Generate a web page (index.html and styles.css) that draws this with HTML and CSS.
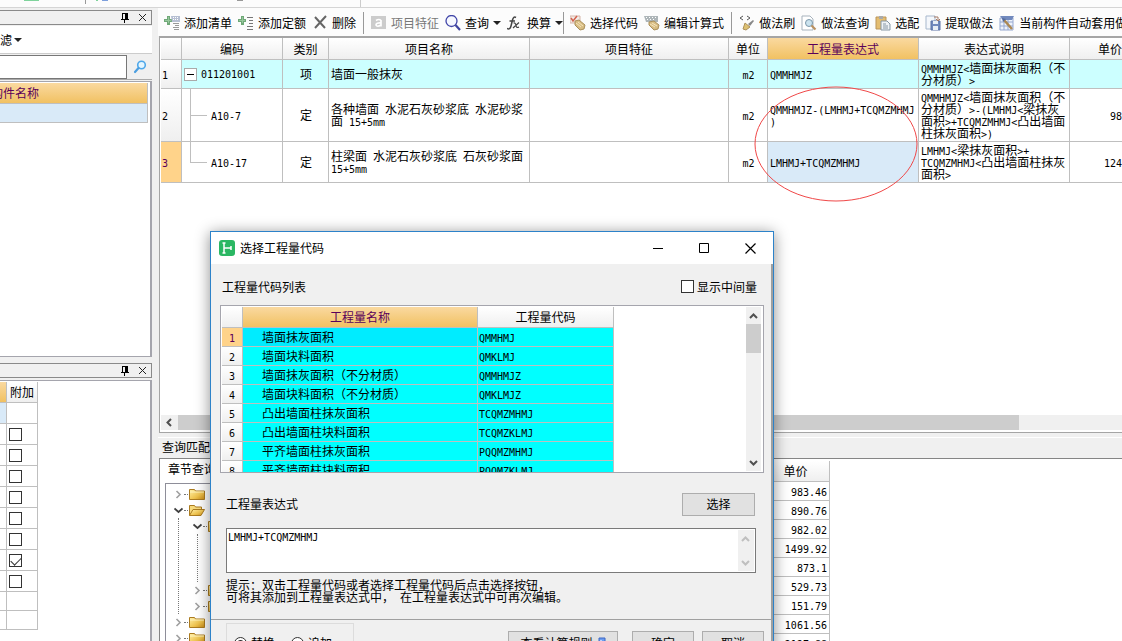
FILE: index.html
```html
<!DOCTYPE html>
<html lang="zh-CN">
<head>
<meta charset="utf-8">
<title>选择工程量代码</title>
<link rel="stylesheet" href="styles.css">
</head>
<body>
<div class="app">
  <header class="strip">
    <svg width="400" height="7" viewBox="0 0 400 7" aria-hidden="true">
      <path fill="#7fd39c" d="M24 0h15v1H24zM96 0h2v1h-2z"/>
      <path fill="#7d9fdc" d="M102 0h6v1h-6z"/>
      <path fill="#999" d="M85 0h1v4h-1zM237 0h6v1h-6z"/>
      <path fill="#ccc" d="M360 0h1v7h-1z"/>
    </svg>
  </header>
  <div class="work">
    <aside class="dock">
      <section class="pane pane-top">
        <div class="pane-title">
          <button class="tiny" aria-label="固定"><svg width="9" height="10" viewBox="0 0 9 10"><path d="M2 0h6v6h1v1H5v3H4V7H1V6h1zM3 1v5h2V1z" fill="#000" fill-rule="evenodd"/></svg></button>
          <button class="tiny" aria-label="关闭"><svg width="9" height="9" viewBox="0 0 9 9"><path d="M1 1l7 7M8 1L1 8" stroke="#222"/></svg></button>
        </div>
        <button class="filter">滤<span class="caret"></span></button>
        <div class="search">
          <input type="text" aria-label="搜索构件">
          <button class="find" aria-label="搜索"><svg width="14" height="14" viewBox="0 0 14 14"><circle cx="8.500" cy="5" r="3.800" fill="#e4f6ff" stroke="#4fa8ea" stroke-width="1.600"/><path d="M5.500 8L2 12" stroke="#4b9ee0" stroke-width="2.200" stroke-linecap="round"/></svg></button>
        </div>
        <div class="names">
          <div class="names-head">构件名称</div>
          <div class="names-row"></div>
        </div>
      </section>
      <section class="pane pane-bottom">
        <div class="pane-title">
          <button class="tiny" aria-label="固定"><svg width="9" height="10" viewBox="0 0 9 10"><path d="M2 0h6v6h1v1H5v3H4V7H1V6h1zM3 1v5h2V1z" fill="#000" fill-rule="evenodd"/></svg></button>
          <button class="tiny" aria-label="关闭"><svg width="9" height="9" viewBox="0 0 9 9"><path d="M1 1l7 7M8 1L1 8" stroke="#222"/></svg></button>
        </div>
        <div class="props">
          <table class="grid attach">
            <thead><tr><th class="hot"></th><th>附加</th></tr></thead>
            <tbody>
              <tr><td class="sel"></td><td></td></tr>
              <tr><td></td><td><input type="checkbox" aria-label="附加 2"></td></tr>
              <tr><td></td><td><input type="checkbox" aria-label="附加 3"></td></tr>
              <tr><td></td><td><input type="checkbox" aria-label="附加 4"></td></tr>
              <tr><td></td><td><input type="checkbox" aria-label="附加 5"></td></tr>
              <tr><td></td><td><input type="checkbox" aria-label="附加 6"></td></tr>
              <tr><td></td><td><input type="checkbox" aria-label="附加 7"></td></tr>
              <tr><td></td><td><input type="checkbox" aria-label="附加 8" checked></td></tr>
              <tr><td></td><td><input type="checkbox" aria-label="附加 9"></td></tr>
              <tr class="low"><td></td><td></td></tr>
              <tr class="low"><td></td><td></td></tr>
            </tbody>
          </table>
        </div>
      </section>
    </aside>

    <main class="main">
      <nav class="toolbar">
        <button class="tool"><svg width="16" height="16" viewBox="0 0 16 16"><path d="M3 1h3v3h2v3H6v3H3V7H0V4h3z" fill="#6fa877"/><path d="M4 2h1v6H4zM1 5h6v1H1z" fill="#97c79d"/><path d="M7 1h9v6H8z" fill="#b6bfd2"/><path d="M9 2h1v1H9zM11 2h1v1h-1zM13 2h1v1h-1zM9 4h1v1H9zM11 4h1v1h-1zM13 4h1v1h-1z" fill="#fff"/><path d="M9 8h6v1H9zM11 10h4v1h-4zM9 12h6v1H9zM10 14h5v1h-5z" fill="#999"/></svg>添加清单</button>
        <button class="tool"><svg width="16" height="16" viewBox="0 0 16 16"><path d="M3 1h3v3h2v3H6v3H3V7H0V4h3z" fill="#6fa877"/><path d="M4 2h1v6H4zM1 5h6v1H1z" fill="#97c79d"/><path d="M9 2h6v1H9zM11 5h4v1h-4zM11 8h4v1h-4zM9 11h6v1H9zM9 14h6v1H9z" fill="#777"/></svg>添加定额</button>
        <button class="tool"><svg width="16" height="16" viewBox="0 0 16 16"><path d="M3 2l10 11M14 1L3 13" stroke="#666" stroke-width="2"/></svg>删除</button>
        <span class="sep"></span>
        <button class="tool" disabled><svg width="16" height="16" viewBox="0 0 16 16"><path d="M0 1h15v13H0z" fill="#ccc"/><path d="M5 5.500q3-2 5 0v6M10 8q-5-.5-5 2 1 2.500 5 0" stroke="#fff" stroke-width="1.700" fill="none"/></svg>项目特征</button>
        <button class="tool"><svg width="16" height="16" viewBox="0 0 16 16"><circle cx="6.500" cy="6" r="5.500" fill="#f6f8ff" stroke="#4146a8" stroke-width="1.300"/><path d="M10.500 10L15 15" stroke="#3f449f" stroke-width="2.200"/></svg>查询<span class="caret"></span></button>
        <button class="tool"><svg width="16" height="16" viewBox="0 0 16 16"><path d="M9 2.500Q6.500 1 5.500 5L4 11Q3 15 0 13.500M2.500 6H8" stroke="#444" stroke-width="1.500" fill="none"/><path d="M6.500 8q2-.5 2.500 2.500T12 12M12 7.500L6 13" stroke="#444" stroke-width="1.200" fill="none"/></svg>换算<span class="caret"></span></button>
        <span class="sep tight"></span>
        <button class="tool"><svg width="16" height="16" viewBox="0 0 16 16"><path d="M0 1h10v7H0z" fill="#f2ece8" stroke="#d6b5a8"/><path d="M1 3l2 3 4-5" stroke="#d2634f" stroke-width="1.500" fill="none"/><path d="M5 6l4-1 6 5-1 4-4 1-5-5z" fill="#d8bd83" stroke="#ab905b"/><path d="M6 8l5 4M8 7l5 4" stroke="#f5e4bc"/></svg>选择代码</button>
        <button class="tool"><svg width="16" height="16" viewBox="0 0 16 16"><path d="M0 1h14v6H2z" fill="#adb5b8"/><path d="M2 2h1v1H2zM5 2h1v1H5zM8 2h1v1H8zM11 2h1v1h-1zM3 4h1v1H3zM6 4h1v1H6zM9 4h1v1H9z" fill="#fff"/><path d="M5 7l5-1 5 4-1 4-4 1-5-5z" fill="#d8bd83" stroke="#ab905b"/><path d="M6 9l5 3M8 8l5 3" stroke="#f5e4bc"/></svg>编辑计算式</button>
        <span class="sep"></span>
        <button class="tool"><svg width="16" height="16" viewBox="0 0 16 16"><path d="M4 1L1 3l3 2M8 1l3 2-3 2" stroke="#555" fill="none"/><path d="M14 5l1 1-4 5-2-2z" fill="#888"/><path d="M6 8l5 4-4 3-3-1z" fill="#ddc172" stroke="#ad925a"/></svg>做法刷</button>
        <button class="tool"><svg width="16" height="16" viewBox="0 0 16 16"><path d="M1 1h8l3 3v11H1z" fill="#fff" stroke="#a8b3bd"/><circle cx="8" cy="8" r="3.500" fill="#cbe3ef" stroke="#7b97aa"/><path d="M10.500 10.500l4 4" stroke="#ba915f" stroke-width="2.200"/></svg>做法查询</button>
        <button class="tool"><svg width="16" height="16" viewBox="0 0 16 16"><path d="M1 2h10v12H1z" fill="#e4bd70" stroke="#ba955b"/><path d="M4 1h4v3H4z" fill="#aaa"/><path d="M6 6h6l3 3v6H6z" fill="#eef2f5" stroke="#8797a4"/><path d="M8 9h3M8 11h5M8 13h5" stroke="#8797a4"/></svg>选配</button>
        <button class="tool"><svg width="16" height="16" viewBox="0 0 16 16"><path d="M1 1h9v13H1z" fill="#f4f7fb" stroke="#a7b8cd"/><path d="M6 6h9v9H6z" fill="#7189bd" stroke="#5c72a6"/><path d="M8 6h5v3H8zM8 11h5v4H8z" fill="#e8edf6"/><path d="M9 2h4v3M11 4l2 2 2-2" stroke="#a57a66" fill="none"/></svg>提取做法</button>
        <button class="tool"><svg width="16" height="16" viewBox="0 0 16 16"><path d="M1 3h13v12H1zM1 7h13M1 11h13M5 3v12M9 3v12" fill="#edf2fb" stroke="#95a8d0"/><path d="M1 1h14l-2 4H4z" fill="#7189bd"/><path d="M5 5l8 9" stroke="#ab8853" stroke-width="2.500"/><path d="M3 3l4 1-3 3z" fill="#536b9e"/></svg>当前构件自动套用做法</button>
      </nav>

      <section class="bill">
        <table class="grid bill-grid">
          <colgroup><col class="c-no"><col class="c-code"><col class="c-kind"><col class="c-name"><col class="c-trait"><col class="c-unit"><col class="c-expr"><col class="c-note"><col></colgroup>
          <thead>
            <tr><th></th><th>编码</th><th>类别</th><th>项目名称</th><th>项目特征</th><th>单位</th><th class="hot">工程量表达式</th><th>表达式说明</th><th class="end">单价</th></tr>
          </thead>
          <tbody>
            <tr class="r1 item">
              <th class="no"><span class="m">1</span></th>
              <td class="code"><button class="fold" aria-label="折叠"></button><span class="m">011201001</span></td>
              <td class="mid">项</td><td>墙面一般抹灰</td><td></td><td class="mid"><span class="m">m2</span></td>
              <td><span class="m">QMMHMJZ</span></td>
              <td><span class="m">QMMHMJZ&lt;</span>墙面抹灰面积（不<br>分材质）<span class="m">&gt;</span></td><td class="end"></td>
            </tr>
            <tr class="r2">
              <th class="no"><span class="m">2</span></th>
              <td class="branch"><span class="m">A10-7</span></td>
              <td class="mid">定</td><td>各种墙面&ensp;水泥石灰砂浆底&ensp;水泥砂浆<br>面&ensp;<span class="m">15+5mm</span></td><td></td><td class="mid"><span class="m">m2</span></td>
              <td><span class="m">QMMHMJZ-(LMHMJ+TCQMZMHMJ<br>)</span></td>
              <td><span class="m">QMMHMJZ&lt;</span>墙面抹灰面积（不<br>分材质）<span class="m">&gt;-(LMHMJ&lt;</span>梁抹灰<br>面积<span class="m">&gt;+TCQMZMHMJ&lt;</span>凸出墙面<br>柱抹灰面积<span class="m">&gt;)</span></td><td class="end"><span class="m">98</span></td>
            </tr>
            <tr class="r3">
              <th class="no cur"><span class="m">3</span></th>
              <td class="branch last"><span class="m">A10-17</span></td>
              <td class="mid">定</td><td>柱梁面&ensp;水泥石灰砂浆底&ensp;石灰砂浆面<br><span class="m">15+5mm</span></td><td></td><td class="mid"><span class="m">m2</span></td>
              <td class="sel"><span class="m">LMHMJ+TCQMZMHMJ</span></td>
              <td><span class="m">LMHMJ&lt;</span>梁抹灰面积<span class="m">&gt;+</span><br><span class="m">TCQMZMHMJ&lt;</span>凸出墙面柱抹灰<br>面积<span class="m">&gt;</span></td><td class="end"><span class="m">124</span></td>
            </tr>
          </tbody>
        </table>
        <div class="hscroll">
          <svg width="17" height="15" viewBox="0 0 17 15" aria-hidden="true"><path d="M10 4L6.500 7.500 10 11" stroke="#505050" stroke-width="2" fill="none"/></svg>
          <div class="hthumb"></div>
        </div>
      </section>

      <section class="query">
        <div class="query-title">查询匹配清单</div>
        <div class="query-body">
          <div class="chapters">
            <div class="chapters-tab">章节查询</div>
            <ul class="tree">
              <li><div class="node"><svg class="chev"><use href="#shut"/></svg><i></i><svg class="dir"><use href="#folder"/></svg></div></li>
              <li><div class="node"><svg class="chev"><use href="#open"/></svg><i></i><svg class="dir"><use href="#folder-open"/></svg></div>
                <ul>
                  <li><div class="node"><svg class="chev"><use href="#open"/></svg><i></i><svg class="dir"><use href="#folder"/></svg></div>
                    <ul><li class="node"></li><li class="node"></li><li class="node"></li></ul>
                  </li>
                  <li><div class="node"><svg class="chev"><use href="#shut"/></svg><i></i><svg class="dir"><use href="#folder"/></svg></div></li>
                  <li><div class="node"><svg class="chev"><use href="#shut"/></svg><i></i><svg class="dir"><use href="#folder"/></svg></div></li>
                </ul>
              </li>
              <li><div class="node"><svg class="chev"><use href="#shut"/></svg><i></i><svg class="dir"><use href="#folder"/></svg></div></li>
              <li><div class="node"><svg class="chev"><use href="#shut"/></svg><i></i><svg class="dir"><use href="#folder"/></svg></div></li>
            </ul>
          </div>
          <div class="prices">
            <table class="grid price-grid">
              <thead><tr><th>单价</th></tr></thead>
              <tbody>
                <tr><td><span class="m">983.46</span></td></tr>
                <tr><td><span class="m">890.76</span></td></tr>
                <tr><td><span class="m">982.02</span></td></tr>
                <tr><td><span class="m">1499.92</span></td></tr>
                <tr><td><span class="m">873.1</span></td></tr>
                <tr><td><span class="m">529.73</span></td></tr>
                <tr><td><span class="m">151.79</span></td></tr>
                <tr><td><span class="m">1061.56</span></td></tr>
                <tr><td><span class="m">2127.88</span></td></tr>
              </tbody>
            </table>
          </div>
        </div>
      </section>
    </main>
  </div>

  <svg class="mark" width="164" height="116" viewBox="0 0 164 116" aria-hidden="true"><ellipse cx="82" cy="58" rx="81" ry="57" fill="none" stroke="#f04848"/></svg>

  <div class="dialog" role="dialog" aria-labelledby="dlg-title">
    <div class="dlg-title">
      <svg width="16" height="16" viewBox="0 0 16 16" aria-hidden="true"><rect width="16" height="16" rx="3" fill="#2bb763"/><path d="M5 3v10M5 8h7M12 6v4M3.500 3h3M3.500 13h3" stroke="#fff" stroke-width="1.500" fill="none"/></svg>
      <h1 id="dlg-title">选择工程量代码</h1>
      <button class="win" aria-label="最小化"><svg width="11" height="11" viewBox="0 0 11 11"><path d="M0 5h10v1H0z"/></svg></button>
      <button class="win" aria-label="最大化"><svg width="11" height="11" viewBox="0 0 11 11"><path d="M.5.5h9v9h-9z" fill="none" stroke="#000"/></svg></button>
      <button class="win" aria-label="关闭"><svg width="11" height="11" viewBox="0 0 11 11"><path d="M.5.5l10 10M10.500.5l-10 10" stroke="#000" stroke-width="1.200"/></svg></button>
    </div>
    <div class="dlg-body">
      <div class="list-bar"><h2>工程量代码列表</h2><label><input type="checkbox">显示中间量</label></div>
      <div class="list">
        <table class="grid codes">
          <colgroup><col class="k-no"><col class="k-name"><col class="k-code"></colgroup>
          <thead><tr><th></th><th class="hot">工程量名称</th><th>工程量代码</th></tr></thead>
          <tbody>
            <tr class="on"><th class="cur"><span class="m">1</span></th><td>墙面抹灰面积</td><td><span class="m">QMMHMJ</span></td></tr>
            <tr><th><span class="m">2</span></th><td>墙面块料面积</td><td><span class="m">QMKLMJ</span></td></tr>
            <tr><th><span class="m">3</span></th><td>墙面抹灰面积（不分材质）</td><td><span class="m">QMMHMJZ</span></td></tr>
            <tr><th><span class="m">4</span></th><td>墙面块料面积（不分材质）</td><td><span class="m">QMKLMJZ</span></td></tr>
            <tr><th><span class="m">5</span></th><td>凸出墙面柱抹灰面积</td><td><span class="m">TCQMZMHMJ</span></td></tr>
            <tr><th><span class="m">6</span></th><td>凸出墙面柱块料面积</td><td><span class="m">TCQMZKLMJ</span></td></tr>
            <tr><th><span class="m">7</span></th><td>平齐墙面柱抹灰面积</td><td><span class="m">PQQMZMHMJ</span></td></tr>
            <tr><th><span class="m">8</span></th><td>平齐墙面柱块料面积</td><td><span class="m">PQQMZKLMJ</span></td></tr>
          </tbody>
        </table>
        <div class="vscroll">
          <svg width="15" height="17" viewBox="0 0 15 17" aria-hidden="true"><path d="M4 11l3.500-3.500L11 11" stroke="#505050" stroke-width="2" fill="none"/></svg>
          <div class="vthumb"></div>
          <svg width="15" height="17" viewBox="0 0 15 17" aria-hidden="true"><path d="M4 7l3.500 3.500L11 7" stroke="#505050" stroke-width="2" fill="none"/></svg>
        </div>
      </div>
      <div class="expr-bar"><label for="expr">工程量表达式</label><button class="btn">选择</button></div>
      <div class="expr">
        <textarea id="expr" class="m">LMHMJ+TCQMZMHMJ</textarea>
        <div class="vscroll pale">
          <svg width="16" height="17" viewBox="0 0 16 17" aria-hidden="true"><path d="M4 11l3.500-3.500L11 11" stroke="#bfbfbf" stroke-width="2" fill="none"/></svg>
          <svg width="16" height="17" viewBox="0 0 16 17" aria-hidden="true"><path d="M4 7l3.500 3.500L11 7" stroke="#bfbfbf" stroke-width="2" fill="none"/></svg>
        </div>
      </div>
      <p class="hint">提示：双击工程量代码或者选择工程量代码后点击选择按钮，<br>可将其添加到工程量表达式中，&ensp;在工程量表达式中可再次编辑。</p>
      <div class="foot">
        <div class="modes">
          <label><input type="radio" name="mode" checked>替换</label>
          <label><input type="radio" name="mode">追加</label>
        </div>
        <div class="actions">
          <button class="btn rules">查看计算规则<svg width="9" height="12" viewBox="0 0 9 12"><path d="M2 1h6v10H2z" fill="#6d9df0" stroke="#3d67c4"/><path d="M3 3h2v5H3z" fill="#b9d2ff"/></svg></button>
          <button class="btn ok">确定</button>
          <button class="btn ok">取消</button>
        </div>
      </div>
    </div>
  </div>
</div>

<svg width="0" height="0" class="defs" aria-hidden="true">
  <linearGradient id="gold" x2="1" y2="1"><stop offset="0" stop-color="#fff0a8"/><stop offset=".6" stop-color="#eec24d"/><stop offset="1" stop-color="#c98b17"/></linearGradient>
  <symbol id="shut" viewBox="0 0 9 9"><path d="M2.500 1L6 4.500 2.500 8" stroke="#a0a0a0" stroke-width="1.600" fill="none"/></symbol>
  <symbol id="open" viewBox="0 0 9 9"><path d="M.5 2.500L4.500 6l4-3.500" stroke="#404040" stroke-width="1.800" fill="none"/></symbol>
  <symbol id="folder" viewBox="0 0 16 13"><path d="M.5 11.500v-10h5l1 1.500h9v8.500z" fill="url(#gold)" stroke="#ab7b20"/><path d="M1 4h14" stroke="#fff3bd"/></symbol>
  <symbol id="folder-open" viewBox="0 0 16 13"><path d="M.5 11.500v-10h5l1 1.500h6v3" fill="#f7da7c" stroke="#ab7b20"/><path d="M.5 11.500L4 5.500h11.500L12 11.500z" fill="url(#gold)" stroke="#ab7b20"/></symbol>
</svg>
</body>
</html>
```

FILE: styles.css
```css
* { box-sizing: border-box; }

body {
  margin: 0;
  font: 12px/12px "Noto Sans CJK SC", sans-serif;
  color: #000;
  background: #f0f0f0;
}

button, input, textarea { font: inherit; color: inherit; margin: 0; }
button { padding: 0; border: 0; background: none; }
svg { flex: none; display: block; }
.defs { position: absolute; }

/* half-width codes and numbers; the short line height keeps mixed lines at 12px */
.m { font-family: "DejaVu Sans Mono", "Liberation Mono", monospace; font-size: 10px; line-height: 8px; }

.app {
  position: relative;
  display: flex;
  flex-direction: column;
  height: 100vh;
  overflow: hidden;
}
.strip { flex: none; height: 8px; background: #fcfcfc; border-bottom: 1px solid #d5d5d5; }
.work { flex: 1; min-height: 0; display: flex; gap: 6px; }

/* shared controls */
.caret {
  border: 4px solid transparent;
  border-top-color: #222;
  border-bottom: 0;
}
input[type="checkbox"] {
  appearance: none;
  width: 13px;
  height: 13px;
  border: 1px solid #333;
  background: #fff;
  display: block;
}
input[type="checkbox"]:checked::after {
  content: "";
  display: block;
  width: 9px;
  height: 5px;
  margin: 2px 1px;
  border: solid #333;
  border-width: 0 0 1px 1px;
  transform: rotate(-45deg);
}
input[type="radio"] {
  appearance: none;
  width: 13px;
  height: 13px;
  border: 1px solid #333;
  border-radius: 50%;
  background: #fff;
}
input[type="radio"]:checked { background: radial-gradient(#333 3px, #fff 4px); }

/* grids */
.grid { border-collapse: separate; border-spacing: 0; table-layout: fixed; }
.grid th, .grid td {
  padding: 0 1px;
  border: solid #bfbfbf;
  border-width: 0 1px 1px 0;
  font-weight: normal;
  white-space: nowrap;
  overflow: hidden;
}
.grid th { background: linear-gradient(#fff, #efefef); text-align: center; }
.grid .hot, .names-head { background: linear-gradient(#fad9a0, #f1c162); color: #5a005a; }
.grid .cur { background: #ffd38a; color: #5a005a; }
.grid .sel { background: #d9eaf8; }

/* left dock */
.dock { flex: none; width: 152px; display: flex; flex-direction: column; padding-top: 2px; }
.pane { display: flex; flex-direction: column; min-height: 0; }
.pane-top { flex: 1; }
.pane-bottom { flex: 0 0 278px; margin-top: 6px; }
.pane-title {
  flex: none;
  display: flex;
  align-items: center;
  justify-content: flex-end;
  gap: 9px;
  height: 15px;
  padding-right: 4px;
  border: solid #8a8a8a;
  border-width: 1px 1px 1px 0;
}
.filter {
  display: flex;
  align-items: center;
  gap: 2px;
  height: 27px;
  margin-top: 1px;
  background: #fff;
}
.search {
  display: flex;
  height: 27px;
  border-top: 1px solid #ccc;
  border-bottom: 1px solid #aaa;
  padding-top: 1px;
}
.search input { flex: 1; min-width: 0; height: 24px; border: 1px solid #777; border-left: 0; background: #fff; }
.find { width: 25px; display: grid; place-items: center; }
.names {
  flex: 1;
  margin-top: 1px;
  padding: 1px 2px 0 0;
  background: #fff;
  border: solid #a5a5ad;
  border-width: 1px 2px 1px 0;
}
.names-head { height: 21px; line-height: 20px; text-indent: -9px; border: solid #bfbfbf; border-width: 0 1px 1px 0; }
.names-row { height: 19px; background: #d9eaf8; border: solid #bfbfbf; border-width: 0 1px 1px 0; }
.props {
  flex: 1;
  margin-top: 2px;
  padding-top: 1px;
  background: #fff;
  border: solid #a5a5ad;
  border-width: 1px 2px 0 0;
}
.attach { width: 38px; }
.attach tr { height: 21px; }
.attach .low { height: 19px; }
.attach th:first-child { width: 7px; }
.attach td:last-child { padding-left: 2px; }

/* main area */
.main { flex: 1; min-width: 0; display: flex; flex-direction: column; }
.toolbar {
  flex: none;
  display: flex;
  align-items: center;
  gap: 6px;
  height: 28px;
  padding: 2px 0 0 6px;
  background: #fcfcfc;
  overflow: hidden;
}
.tool { flex: none; display: flex; align-items: center; gap: 4px; white-space: nowrap; line-height: 16px; }
.tool:disabled { color: #777; }
.sep { flex: none; width: 1px; height: 22px; margin: 0 1px; background: #999; }
.sep.tight { margin: 0 0 0 -6px; }

.bill {
  flex: 1;
  min-height: 0;
  display: flex;
  flex-direction: column;
  justify-content: space-between;
  margin-left: 1px;
  padding: 0 0 2px 1px;
  background: #fff;
  border: solid #a5a5a5;
  border-width: 2px 0 1px 1px;
}
.bill-grid { width: 100%; }
.bill-grid thead tr { height: 22px; }
.c-no { width: 21px; }
.c-code { width: 101px; }
.c-kind { width: 46px; }
.c-name { width: 201px; }
.c-trait { width: 199px; }
.c-unit { width: 39px; }
.c-expr, .c-note { width: 151px; }
.bill-grid .r1 { height: 29px; }
.bill-grid .r2 { height: 53px; }
.bill-grid .r3 { height: 41px; }
.bill-grid .item td { background: #cff; }
.bill-grid .no { text-align: left; }
.bill-grid .mid { text-align: center; }
.bill-grid .end { text-align: right; border-right: 0; padding: 0; }
.bill-grid td { padding-left: 2px; }
.bill-grid .code { padding: 0 2px; }
.fold {
  width: 13px;
  height: 13px;
  margin-right: 4px;
  vertical-align: middle;
  border: 1px solid #aaa;
  background: linear-gradient(#000, #000) center / 7px 1px no-repeat #fff;
}
.bill-grid .branch {
  padding-left: 29px;
  background:
    linear-gradient(#bfbfbf, #bfbfbf) 8px 0 / 1px 100% no-repeat,
    linear-gradient(#bfbfbf, #bfbfbf) 8px 50% / 17px 1px no-repeat;
}
.bill-grid .last {
  background:
    linear-gradient(#bfbfbf, #bfbfbf) 8px 0 / 1px 50% no-repeat,
    linear-gradient(#bfbfbf, #bfbfbf) 8px 50% / 17px 1px no-repeat;
}
.hscroll { display: flex; height: 15px; background: #f0f0f0; }
.hthumb { width: calc(100% * 7 / 8); background: #cdcdcd; }

.query { flex: 0 0 208px; min-height: 0; display: flex; flex-direction: column; overflow: hidden; }
.query-title {
  flex: none;
  height: 21px;
  margin-top: 4px;
  padding-left: 4px;
  line-height: 18px;
  border-top: 1px solid #fff;
}
.query-body {
  flex: 1;
  min-height: 0;
  display: flex;
  margin-left: 1px;
  border: solid #858585;
  border-width: 1px 0 0 1px;
  background: #fff;
}
.chapters { flex: 0 0 602px; padding-left: 5px; display: flex; flex-direction: column; }
.chapters-tab { flex: none; height: 24px; line-height: 20px; padding-left: 3px; }
.tree { flex: 1; padding: 2px 0 0 8px; border: solid #8e8e99; border-width: 1px 0 0 1px; }
.tree, .tree ul { margin: 0; list-style: none; }
.tree ul { margin-left: 4px; padding: 0 0 0 14px; border-left: 1px dotted #777; }
.node { display: flex; align-items: center; height: 16px; }
.node i { width: 4px; margin-right: 1px; border-top: 1px dotted #777; }
.chev { width: 9px; height: 9px; margin-right: 1px; }
.dir { width: 16px; height: 13px; }
.prices { flex: 1; padding-top: 2px; }
.price-grid { width: 68px; }
.price-grid thead tr { height: 21px; }
.price-grid tbody tr { height: 19px; }
.price-grid td { text-align: right; padding-right: 2px; }

/* highlight ring over the expression cells */
.mark { position: absolute; left: 754px; top: 86px; }

/* dialog */
.dialog {
  position: absolute;
  left: 210px;
  top: 231px;
  width: 564px;
  border: 1px solid #2c82c9;
  background: #f0f0f0;
  box-shadow: 0 2px 14px rgba(0, 0, 0, .45);
}
.dlg-title { display: flex; align-items: center; height: 32px; padding-left: 8px; background: #fff; }
.dlg-title h1 { flex: 1; margin: 0 0 0 5px; font-size: 12px; font-weight: normal; line-height: 16px; }
.win { width: 46px; height: 28px; display: grid; place-items: center; }
.dlg-body { padding: 0 7px 0 9px; border-right: 2px solid #a0a0a0; }
.list-bar { display: flex; align-items: center; justify-content: space-between; height: 41px; padding: 4px 7px 0 2px; }
.list-bar h2 { margin: 0; font-size: 12px; font-weight: normal; }
.list-bar label { display: flex; align-items: center; gap: 3px; }
.list {
  display: flex;
  justify-content: space-between;
  height: 168px;
  padding: 1px;
  overflow: hidden;
  background: #fff;
  border: 1px solid #a5a5ad;
}
.codes { width: 392px; height: 173px; }
.k-no { width: 21px; }
.k-name { width: 235px; }
.k-code { width: 136px; }
.codes thead tr { height: 21px; }
.codes tbody tr { height: 19px; }
.codes td { background: #0ff; }
.codes td:nth-child(2) { padding-left: 19px; }
.codes .on td:nth-child(2) { background: #00ecff; }
.vscroll { display: flex; flex-direction: column; width: 15px; margin-right: 1px; background: #f0f0f0; }
.vthumb { height: 29px; margin-bottom: auto; background: #cdcdcd; }
.pale { width: 16px; justify-content: space-between; }

.expr-bar { display: flex; align-items: center; justify-content: space-between; height: 55px; padding: 7px 9px 0 6px; }
.btn {
  display: flex;
  align-items: center;
  justify-content: center;
  gap: 4px;
  width: 73px;
  height: 23px;
  border: 1px solid #adadad;
  background: #e1e1e1;
}
.expr { display: flex; height: 45px; margin: 0 8px 0 6px; padding: 1px 0; border: 1px solid #7a7a7a; background: #fff; }
.expr textarea { flex: 1; border: 0; padding: 2px 1px; line-height: 12px; resize: none; overflow: hidden; background: none; outline: 0; }
.hint { margin: 6px 0 16px; padding-left: 6px; }
.foot {
  display: flex;
  align-items: flex-start;
  justify-content: space-between;
  margin: 0 -7px 0 -9px;
  padding: 3px 7px 8px 15px;
  border-top: 1px solid #a0a0a0;
}
.modes { display: flex; align-items: center; gap: 16px; width: 128px; height: 40px; padding-left: 7px; border: 1px solid #dcdcdc; }
.modes label { display: flex; align-items: center; gap: 4px; }
.actions { display: flex; gap: 8px; padding-top: 8px; }
.rules { width: 110px; margin-right: 6px; }
.ok { width: 62px; }
```
